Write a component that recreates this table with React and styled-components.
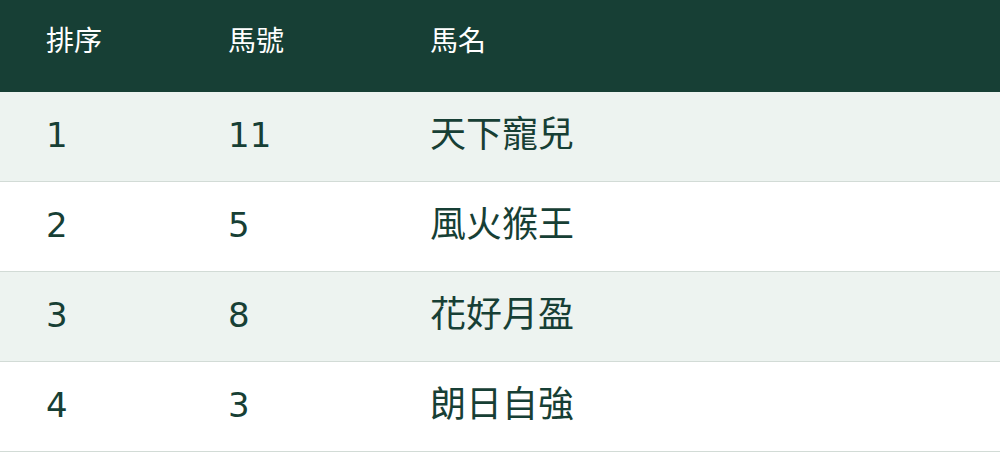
import React from "react";
import styled, { createGlobalStyle } from "styled-components";

const GlobalStyle = createGlobalStyle`
  html, body {
    margin: 0;
    padding: 0;
    background: #ffffff;
  }
  body {
    font-family: "DejaVu Sans", "Noto Sans CJK TC", "Noto Sans CJK SC", sans-serif;
  }
`;

const Table = styled.div`
  width: 1000px;
  display: flex;
  flex-direction: column;
`;

const Row = styled.div`
  display: grid;
  grid-template-columns: 182px 202px 1fr;
  align-items: center;
  padding-left: 46px;
  box-sizing: border-box;
  height: ${p => (p.$head ? "92px" : "90px")};
  background: ${p => (p.$head ? "#173f35" : p.$shaded ? "#edf3f0" : "#ffffff")};
  border-bottom: ${p => (p.$head ? "none" : "1px solid #d2dbd6")};
`;

const HeadCell = styled.div`
  color: #ffffff;
  font-size: 28px;
  line-height: 1;
  margin-top: -8px;
`;

const Cell = styled.div`
  color: #173f35;
  font-size: ${p => (p.$num ? "34px" : "36px")};
  line-height: 1;
  margin-top: -4px;
`;

const rows = [
  { rank: "1", no: "11", name: "天下寵兒" },
  { rank: "2", no: "5", name: "風火猴王" },
  { rank: "3", no: "8", name: "花好月盈" },
  { rank: "4", no: "3", name: "朗日自強" },
];

export default function App() {
  return (
    <>
      <GlobalStyle />
      <Table>
        <Row $head>
          <HeadCell>排序</HeadCell>
          <HeadCell>馬號</HeadCell>
          <HeadCell>馬名</HeadCell>
        </Row>
        {rows.map((r, i) => (
          <Row key={r.rank} $shaded={i % 2 === 0}>
            <Cell $num>{r.rank}</Cell>
            <Cell $num>{r.no}</Cell>
            <Cell>{r.name}</Cell>
          </Row>
        ))}
      </Table>
    </>
  );
}
